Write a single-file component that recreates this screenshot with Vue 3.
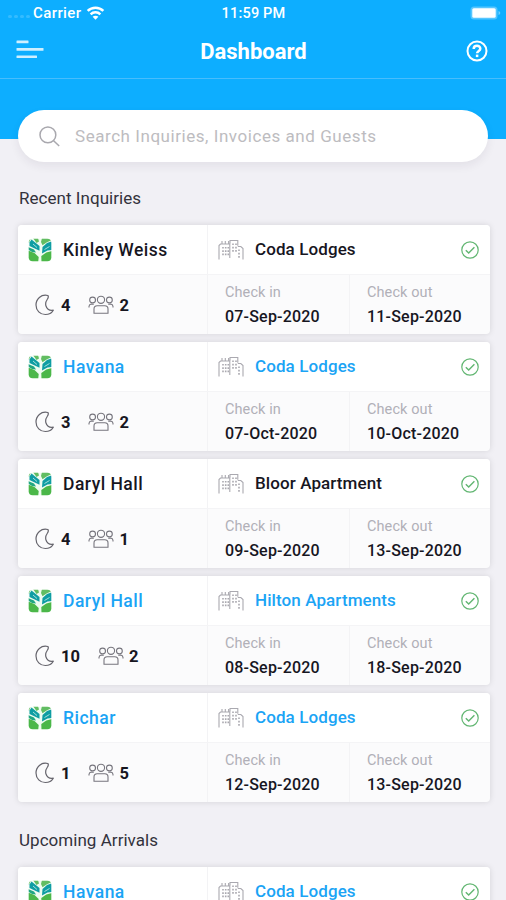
<script setup>
const recent = [
  { guest: 'Kinley Weiss', place: 'Coda Lodges', nights: 4, people: 2, from: '07-Sep-2020', to: '11-Sep-2020', read: true },
  { guest: 'Havana', place: 'Coda Lodges', nights: 3, people: 2, from: '07-Oct-2020', to: '10-Oct-2020' },
  { guest: 'Daryl Hall', place: 'Bloor Apartment', nights: 4, people: 1, from: '09-Sep-2020', to: '13-Sep-2020', read: true },
  { guest: 'Daryl Hall', place: 'Hilton Apartments', nights: 10, people: 2, from: '08-Sep-2020', to: '18-Sep-2020' },
  { guest: 'Richar', place: 'Coda Lodges', nights: 1, people: 5, from: '12-Sep-2020', to: '13-Sep-2020' },
]
const arrivals = [
  { guest: 'Havana', place: 'Coda Lodges' },
]
const sections = [
  { title: 'Recent Inquiries', items: recent },
  { title: 'Upcoming Arrivals', items: arrivals },
]
</script>

<template>
  <div class="screen">
    <header class="top">
      <div class="status">
        <div class="carrier">
          <span class="signal"><i v-for="n in 4" :key="n"></i></span>
          <span class="carrier-name">Carrier</span>
          <svg class="wifi" width="19" height="14" viewBox="0 0 20 15" fill="none" stroke="#fff" stroke-width="2.7">
            <path d="M1.600 5.300C6.200.7 13.800.7 18.400 5.300M4.800 8.900c2.800-2.800 7.600-2.800 10.400 0" />
            <path d="M10 14.600L6.900 11.600c1.700-1.600 4.500-1.600 6.200 0z" fill="#fff" stroke="none" />
          </svg>
        </div>
        <div class="time">11:59 PM</div>
        <svg class="battery" width="31" height="14" viewBox="0 0 31 14">
          <rect x=".5" y=".5" width="27" height="13" rx="3.500" fill="#fff" fill-opacity=".3" />
          <rect x="2.300" y="2.200" width="23.400" height="9.600" rx="1.500" fill="#fff" />
          <path d="M28.500 5v4q1.800-.7 1.800-2T28.500 5z" fill="#fff" fill-opacity=".4" />
        </svg>
      </div>
      <div class="nav">
        <svg class="menu" width="28" height="19" viewBox="0 0 28 19" fill="#fff" fill-opacity=".8">
          <rect x=".5" y=".6" width="12" height="2.600" rx=".5" />
          <rect x=".5" y="8" width="27" height="2.700" rx=".5" />
          <rect x=".5" y="15.500" width="20.500" height="2.600" rx=".5" />
        </svg>
        <h1>Dashboard</h1>
        <svg class="help" width="22" height="22" viewBox="0 0 22 22" fill="none" stroke="#fff">
          <circle cx="11" cy="11" r="9.500" stroke-width="2" />
          <path d="M7.700 8.900c0-4.200 6.600-4.100 6.600-.2 0 2.200-3.200 2.300-3.200 4.600" stroke-width="2.500" />
          <path d="M11.100 14.600v2.500" stroke-width="2.500" />
        </svg>
      </div>
    </header>

    <div class="search">
      <svg width="22" height="22" viewBox="0 0 22 22" fill="none" stroke="#a9a8ae" stroke-width="1.500">
        <circle cx="8.900" cy="9.900" r="7.900" />
        <path d="M14.600 15.700l5.600 5.300" />
      </svg>
      <span>Search Inquiries, Invoices and Guests</span>
    </div>

    <section v-for="s in sections" :key="s.title">
      <h2>{{ s.title }}</h2>
      <div class="list">
        <article v-for="(b, i) in s.items" :key="i" class="card" :class="{ unread: !b.read }">
          <div class="row head">
            <div class="guest">
              <svg class="logo" width="24" height="24" viewBox="0 0 24 24">
                <defs>
                  <clipPath :id="`tile-${s.title.length}-${i}`"><rect x=".7" y=".7" width="22.600" height="22.600" rx="4" /></clipPath>
                </defs>
                <g :clip-path="`url(#tile-${s.title.length}-${i})`">
                  <rect width="24" height="24" fill="#effcf0" />
                  <path d="M0 0h3L1 4.500H0zM5 0h5l1 3.500L8.500 5zM14 0h10v2l-5 2.200-4.500 3L13 4z" fill="#62bd62" />
                  <path d="M3.500 1.500L11.500 8v4.800L1.500 8V4.500z" fill="#0f9da3" />
                  <path d="M14.500 9L19 5l5-1.800V12l-4.500.6-5.500 3z" fill="#0f9da3" />
                  <path d="M0 9l6 2.500 2 3L4 14l-4-2.500z" fill="#21a683" />
                  <path d="M0 12.500L6.500 15l4.200 4-.5 5H0z" fill="#4bb749" />
                  <path d="M13.300 18l5-3.500L24 13v11H13.500z" fill="#4bb749" />
                  <path d="M16.500 11.500l5-3M5 6l4 3.500" stroke="#c9efe8" stroke-width=".8" />
                </g>
              </svg>
              <span class="name">{{ b.guest }}</span>
            </div>
            <div class="place">
              <svg class="building" width="26" height="22" viewBox="0 0 26 22" fill="none" stroke="#aaa9b0" stroke-width="1.100">
                <path d="M1 20.500V6.500L2.500 5h9.300v14M4 5V2M7.300 5V2M10.600 5V2M12 4.500V1.500h7.800v5.300M19.800 7.500h3L25 9.500v11" />
                <path d="M5 8v10M7.700 8v10M10.300 8v10" stroke-width="1.600" stroke-dasharray="1.600 1.700" />
                <path d="M15 4.500v9M18 4.500v9M21 10.500v9" stroke-width="1.600" stroke-dasharray="1.600 1.700" />
              </svg>
              <span class="name">{{ b.place }}</span>
              <svg class="check" width="18" height="18" viewBox="0 0 18 18" fill="none" stroke="#62b672" stroke-width="1.200">
                <circle cx="9" cy="9" r="8.200" />
                <path d="M4.800 9.200l2.900 2.900 5.700-5.900" stroke-width="1.400" />
              </svg>
            </div>
          </div>
          <div v-if="b.from" class="row body">
            <div class="counts">
              <svg class="moon" width="20" height="22" viewBox="0 0 20 22" fill="none" stroke="#66656d" stroke-width="1.200" stroke-linejoin="round">
                <path d="M12.800 1.500C6 0 1 5 1 11c0 5.500 4.200 9.500 9.300 9.500 3.600 0 6.500-1.600 8-4.300-3.300.5-6.300-1-7.300-4.200-.8-2.500-.2-4.500 1.200-6.500 1.200-1.600 1.500-3 .6-4z" />
              </svg>
              <b>{{ b.nights }}</b>
              <svg class="people" width="26" height="20" viewBox="0 0 26 20" fill="none" stroke="#77767e" stroke-width="1.100">
                <circle cx="13" cy="4.800" r="3.600" />
                <circle cx="4.600" cy="5" r="2.900" />
                <circle cx="21.400" cy="5" r="2.900" />
                <path d="M6 18.300V14q0-3.200 3.200-3.200h7.600q3.200 0 3.200 3.200v4.300z" />
                <path d="M1 12.500v-1q0-2 2.200-2.500l2.600.2M25 12.500v-1q0-2-2.200-2.500l-2.600.2" />
              </svg>
              <b>{{ b.people }}</b>
            </div>
            <div class="date in"><small>Check in</small><b>{{ b.from }}</b></div>
            <div class="date out"><small>Check out</small><b>{{ b.to }}</b></div>
          </div>
        </article>
      </div>
    </section>
  </div>
</template>

<style>
body { background: #f1f0f5; overflow: hidden; }
</style>

<style scoped>
* { box-sizing: border-box; }
.screen {
  width: 506px;
  height: 900px;
  overflow: hidden;
  background: #f1f0f5;
  color: #17161f;
  font-family: Roboto, "Liberation Sans", sans-serif;
}
svg { display: block; flex: none; }
.top { height: 139px; background: #0daeff; color: #fff; }
.status {
  height: 26px;
  display: grid;
  grid-template-columns: 1fr auto 1fr;
  align-items: center;
  padding: 0 5px 0 8px;
}
.carrier { display: flex; align-items: center; }
.signal { display: flex; gap: 2px; width: 25px; padding-top: 7px; }
.signal i { width: 4px; height: 3px; border-radius: 2px; background: rgba(255, 255, 255, .17); }
.carrier-name { font-size: 15px; font-weight: 500; letter-spacing: .4px; }
.wifi { margin-left: 5px; }
.time { font-size: 14.500px; font-weight: 500; letter-spacing: .2px; margin-right: 2px; }
.battery { justify-self: end; }
.nav {
  height: 53px;
  display: grid;
  grid-template-columns: 1fr auto 1fr;
  align-items: center;
  padding: 0 18px 4px 16px;
  border-bottom: 1px solid #48bdfc;
}
h1 { margin: 3px 0 0 3px; font-size: 22px; font-weight: 700; line-height: 28px; }
.menu { margin-top: -1px; }
.help { justify-self: end; margin-top: 2px; }
.search {
  position: relative;
  display: flex;
  align-items: center;
  gap: 14px;
  height: 52px;
  margin: -29px 18px 0;
  padding-left: 21px;
  border-radius: 26px;
  background: #fff;
  box-shadow: 0 4px 10px rgba(40, 35, 60, .07);
  color: #bdbcc0;
  font-size: 17px;
  letter-spacing: .55px;
}
h2 {
  margin: 0;
  height: 63px;
  padding: 26px 19px 0;
  font-size: 17px;
  font-weight: 400;
  line-height: 21px;
  letter-spacing: .04px;
  color: #33323c;
}
section + section h2 { height: 65px; padding-top: 28px; }
.list { display: flex; flex-direction: column; gap: 8px; padding: 0 16px 0 18px; }
.card {
  height: 109px;
  border-radius: 4px;
  background: #fbfbfc;
  box-shadow: 0 0 6px rgba(0, 0, 0, .12);
}
.row { display: grid; }
.head {
  grid-template-columns: 190px 1fr;
  height: 50px;
  border-bottom: 1px solid #f4f4f6;
  border-radius: 4px 4px 0 0;
  background: #fff;
}
.body { grid-template-columns: 190px 142px 1fr; height: 59px; }
.guest, .place, .counts { display: flex; align-items: center; }
.guest, .counts, .in { border-right: 1px solid #f3f3f5; }
.guest { padding-left: 10px; }
.logo { margin-right: 11px; }
.place { padding: 0 11px 0 10px; }
.building { margin-right: 11px; }
.check { margin-left: auto; }
.name { font-size: 17.500px; font-weight: 500; letter-spacing: .48px; }
.place .name { margin-top: -1px; font-size: 17px; letter-spacing: .1px; }
.unread .name { color: #1ba4f5; }
.counts { padding: 1px 0 0 17px; font-size: 16.500px; }
.counts b { font-weight: 700; }
.moon { margin-right: 6px; }
.people { margin: -1px 5px 0 18px; }
.date { padding: 8px 0 0 17px; }
.date small, .date b { display: block; }
.date small { font-size: 14.500px; line-height: 20px; color: #b1b0b8; letter-spacing: .1px; }
.date b { margin-top: 4px; font-size: 16px; font-weight: 500; line-height: 20px; letter-spacing: .2px; }
</style>
